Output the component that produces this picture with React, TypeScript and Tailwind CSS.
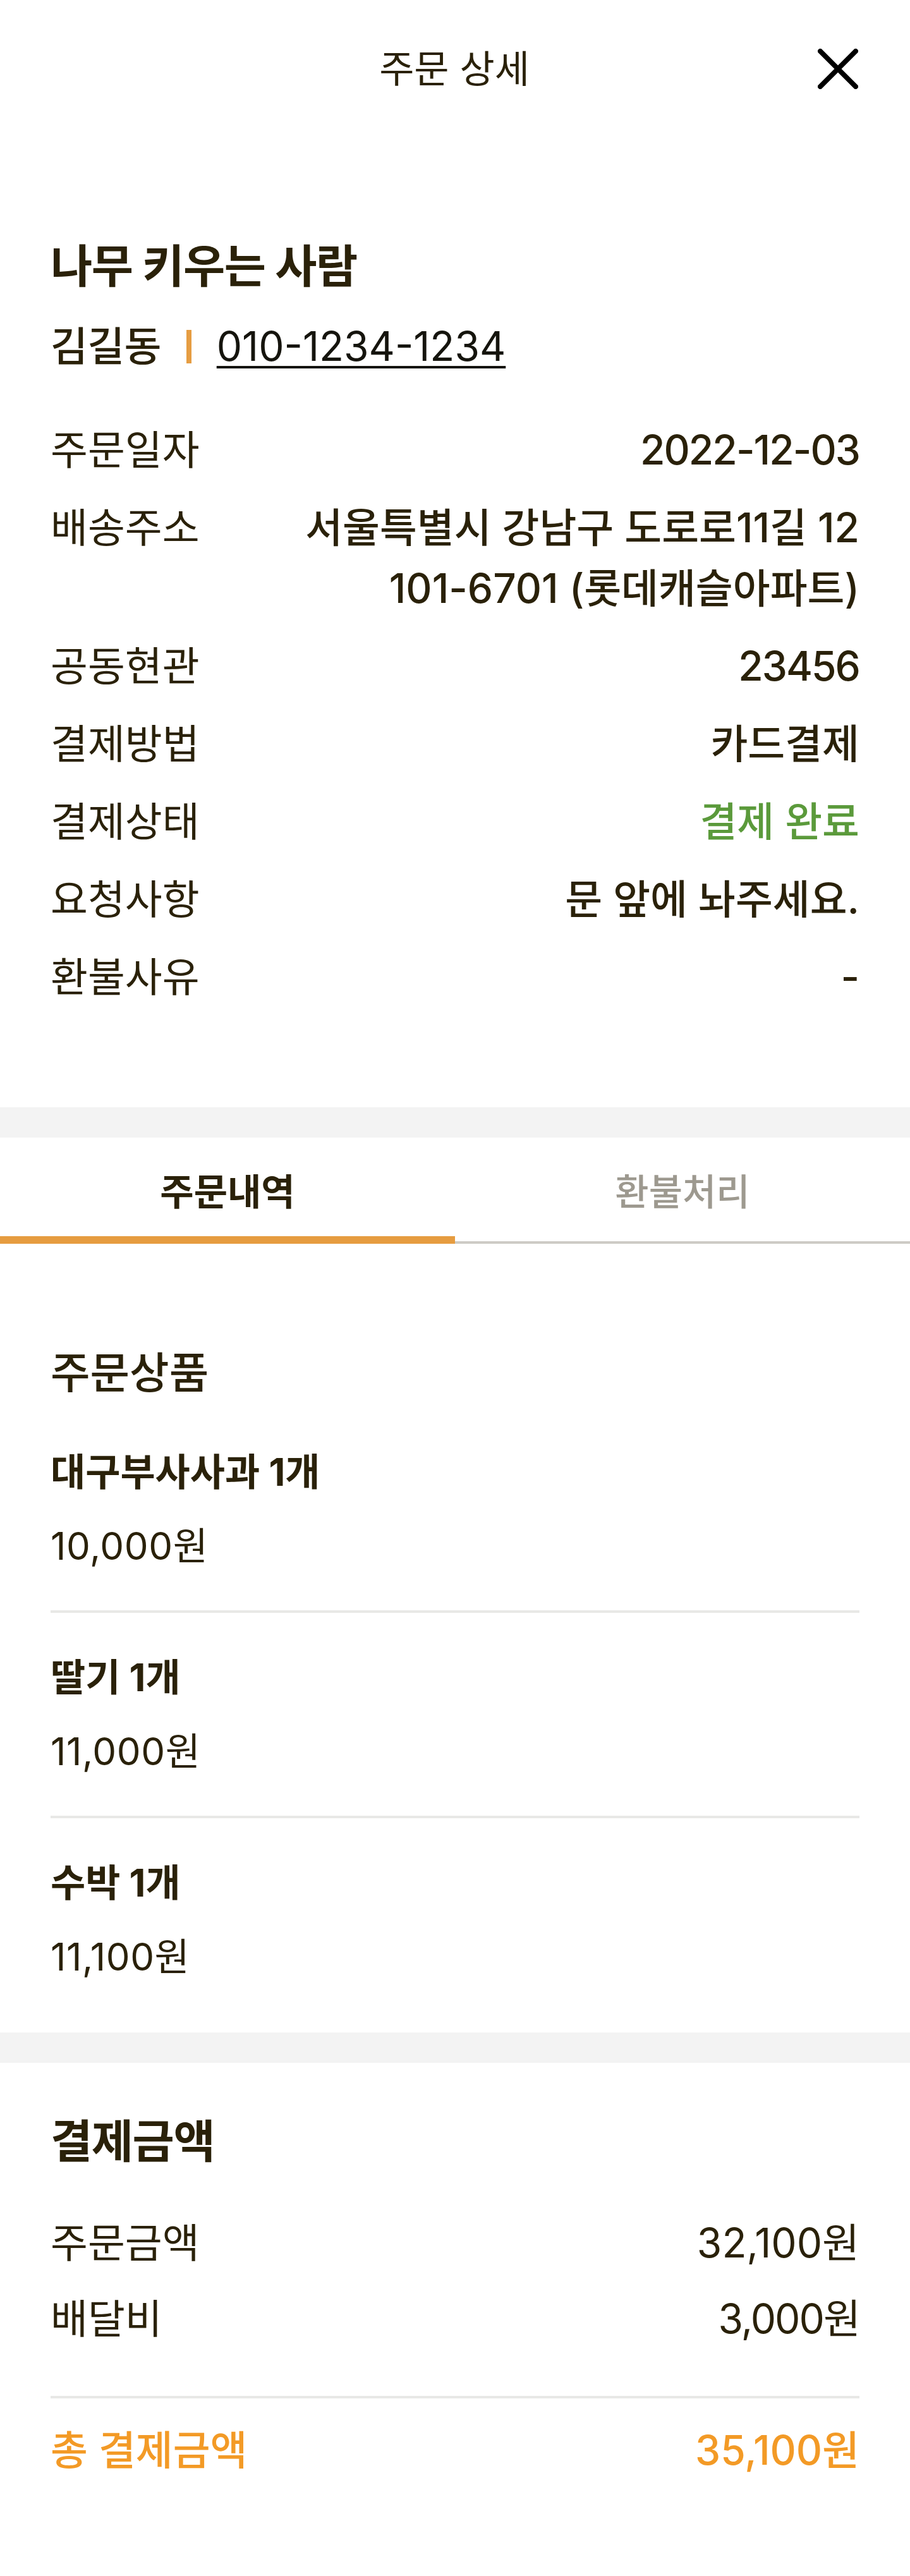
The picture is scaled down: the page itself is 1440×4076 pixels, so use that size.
import React from 'react';

const FONT = '[font-family:Inter,"Noto_Sans_CJK_KR",sans-serif]';

// order detail data
const info = [
  { label: '주문일자', value: ['2022-12-03'], num: true },
  { label: '배송주소', value: ['서울특별시 강남구 도로로11길 12', '101-6701 (롯데캐슬아파트)'] },
  { label: '공동현관', value: ['23456'], num: true },
  { label: '결제방법', value: ['카드결제'] },
  { label: '결제상태', value: ['결제 완료'], green: true },
  { label: '요청사항', value: ['문 앞에 놔주세요.'] },
  { label: '환불사유', value: ['-'] },
];

const items = [
  { name: '대구부사사과 1개', price: '10,000원' },
  { name: '딸기 1개', price: '11,000원' },
  { name: '수박 1개', price: '11,100원' },
];

const CloseIcon = () => (
  <svg width="64" height="64" viewBox="0 0 64 64" fill="none">
    <path d="M4 4L60 60M60 4L4 60" stroke="#000" strokeWidth="8" strokeLinecap="round" />
  </svg>
);

export default function App() {
  return (
    <div className={`min-h-screen w-full bg-white text-[#2a2109] ${FONT}`}>
      {/* header */}
      <header className="grid h-[218px] grid-cols-[1fr_auto_1fr] items-center pl-[80px] pr-[82px]">
        <div />
        <h1 className="text-[60px] leading-[80px] font-normal">주문 상세</h1>
        <button className="justify-self-end">
          <CloseIcon />
        </button>
      </header>

      {/* customer + order info */}
      <section className="px-[80px] pt-[153px] pb-[158px]">
        <h2 className="text-[72px] leading-[100px] font-bold tracking-[-0.02em]">나무 키우는 사람</h2>
        <div className="mt-[29px] flex h-[96px] items-center">
          <span className="text-[64px] font-medium tracking-[-0.01em]">김길동</span>
          <span className="mx-[40px] h-[53px] w-[8px] bg-[#e69d42]" />
          <span className="text-[64px] text-[#15140d] underline decoration-[4px] underline-offset-[8px]">
            010-1234-1234
          </span>
        </div>

        <dl className="mt-[68px] flex flex-col gap-[27px]">
          {info.map(row => (
            <div key={row.label} className="flex items-start justify-between text-[64px] leading-[96px]">
              <dt className="font-normal">{row.label}</dt>
              <dd
                className={`text-right font-medium ${row.num ? 'tracking-[-0.03em]' : ''} ${
                  row.green ? 'text-[#5b9a3b]' : ''
                }`}
              >
                {row.value.map(line => (
                  <div key={line}>{line}</div>
                ))}
              </dd>
            </div>
          ))}
        </dl>
      </section>

      <div className="h-[48px] bg-[#f3f3f3]" />

      {/* tabs */}
      <nav className="flex h-[168px]">
        <div className="flex flex-1 flex-col items-center">
          <span className="pt-[38px] text-[58px] leading-[96px] font-semibold">주문내역</span>
          <span className="mt-auto h-[12px] w-full bg-[#e69c40]" />
        </div>
        <div className="flex flex-1 flex-col items-center">
          <span className="pt-[38px] text-[58px] leading-[96px] font-medium text-[#9d998f]">환불처리</span>
          <span className="mt-auto h-[4px] w-full bg-[#cdcbc5]" />
        </div>
      </nav>

      {/* ordered items */}
      <section className="px-[80px] pt-[156px] pb-[18px]">
        <h3 className="text-[68px] leading-[96px] font-medium">주문상품</h3>
        <ul className="mt-[7px] divide-y-[4px] divide-[#e8e8e6]">
          {items.map(item => (
            <li key={item.name} className="py-[60px]">
              <p className="text-[60px] leading-[84px] font-bold">{item.name}</p>
              <p className="mt-[33px] text-[60px] leading-[84px] tracking-[0.01em]">{item.price}</p>
            </li>
          ))}
        </ul>
      </section>

      <div className="h-[48px] bg-[#f3f3f3]" />

      {/* payment summary */}
      <section className="px-[80px] pt-[74px] pb-[160px]">
        <h3 className="text-[72px] leading-[100px] font-bold tracking-[-0.02em]">결제금액</h3>
        <div className="mt-[63px] flex flex-col gap-[24px] text-[64px] leading-[96px]">
          <div className="flex justify-between">
            <span>주문금액</span>
            <span>32,100원</span>
          </div>
          <div className="flex justify-between">
            <span>배달비</span>
            <span className="tracking-[-0.03em]">3,000원</span>
          </div>
        </div>
        <div className="mt-[74px] h-[4px] bg-[#e8e8e6]" />
        <div className="mt-[34px] flex justify-between text-[64px] leading-[96px] font-medium text-[#f39a26]">
          <span>총 결제금액</span>
          <span>35,100원</span>
        </div>
      </section>
    </div>
  );
}
